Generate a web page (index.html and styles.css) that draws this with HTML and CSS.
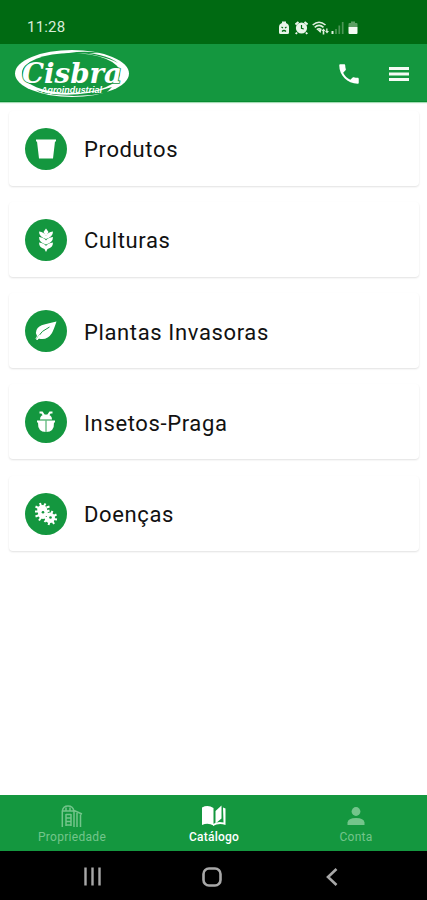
FILE: index.html
```
<!DOCTYPE html>
<html lang="pt-BR">
<head>
    <meta charset="UTF-8">
    <title>Cisbra - Catálogo</title>
    <link rel="stylesheet" href="styles.css">
</head>
<body>

<div class="app">
    <div class="status">
        <span class="time">11:28</span>
        <div class="status-icons">
            <svg width="10" height="14" viewBox="0 0 10 14">
                <path d="M3 0.500h4v1.500q3 1 3 4v5.500q0 1.500-1.500 1.500h-7Q0 13 0 11.500V6q0-3 3-4z" fill="#e9f5e9"/>
                <path d="M2.500 6l1.500 1M7.500 6L6 7M3 10.500q2-2 4 0" stroke="#006a12" stroke-width="1.200" fill="none"/>
            </svg>
            <svg class="alarm" width="13" height="14" viewBox="0 0 13 14">
                <path d="M0.500 3.500L3.500 1M12.500 3.500L9.500 1M2 11.500L0.800 13M11 11.500l1.200 1.500" stroke="#e9f5e9" stroke-width="2"/>
                <circle cx="6.500" cy="7" r="5.600" fill="#e9f5e9"/>
                <path d="M6.500 4v3.300l2.300 0.700" stroke="#006a12" stroke-width="1.200" fill="none"/>
            </svg>
            <svg width="17" height="14" viewBox="0 0 17 14">
                <path d="M0.700 4Q7-1.500 13.500 4M2.700 6.400Q7 2.500 11.500 6.400M4.800 8.700Q7 6.800 9.300 8.700" stroke="#dff0df" stroke-width="1.600" fill="none"/>
                <path d="M5 8.500h4.500L8.500 12zM9.500 10L11.500 7.500l2 2.500h-1.200v3.500h-1.600V10zM13 10h1.200V7.500h1.300V10H17l-2 2.500z" fill="#dff0df"/>
            </svg>
            <svg class="signal" width="13" height="14" viewBox="0 0 13 14">
                <path d="M1.500 10v3" stroke="#dff0df" stroke-width="2"/>
                <path d="M5 8v5M8.300 4.500V13M11.700 1v12" stroke="#4c9656" stroke-width="1.700"/>
            </svg>
            <svg width="10" height="14" viewBox="0 0 10 14">
                <path d="M3 0.500h4V2h1.500Q9.500 2 9.500 3v3h-9V3q0-1 1-1H3z" fill="#5ca064"/>
                <path d="M0.500 6h9v6q0 1-1 1h-7q-1 0-1-1z" fill="#f4fbf4"/>
            </svg>
        </div>
    </div>

    <header class="topbar">
        <svg class="logo" width="116" height="50" viewBox="0 0 116 50">
            <ellipse cx="58" cy="24.500" rx="57" ry="23.500" fill="#fff"/>
            <ellipse cx="57" cy="24" rx="49" ry="20" fill="#14973f"/>
            <path d="M39 8Q63 0 86 4Q60 4 39 8z" fill="#14973f"/>
            <path d="M60 3Q91 4 104 14Q89 6 60 3z" fill="#14973f"/>
            <path d="M22 41Q55 52 98 38L92 44Q60 50 28 44z" fill="#14973f"/>
            <text class="logo-name" x="8" y="34" textLength="100" lengthAdjust="spacingAndGlyphs">Cisbra</text>
            <text class="logo-sub" x="27" y="43.500" textLength="61" lengthAdjust="spacingAndGlyphs">Agroindustrial</text>
        </svg>
        <div class="actions">
            <svg width="26" height="26" viewBox="0 0 24 24" fill="#fff">
                <path d="M6.620 10.790c1.440 2.830 3.760 5.140 6.590 6.590l2.200-2.200c.27-.27.67-.36 1.020-.24 1.120.37 2.330.57 3.570.57.55 0 1 .45 1 1V20c0 .55-.45 1-1 1-9.390 0-17-7.610-17-17 0-.55.45-1 1-1h3.500c.55 0 1 .45 1 1 0 1.250.2 2.450.57 3.570.11.35.03.74-.25 1.020l-2.200 2.200z"/>
            </svg>
            <svg width="20" height="14" viewBox="0 0 20 14" fill="#f4fbf4">
                <path d="M0 0h20v3H0zM0 5.500h20v3H0zM0 11h20v3H0z"/>
            </svg>
        </div>
    </header>

    <main class="list">
        <div class="card">
            <span class="badge">
                <svg width="20" height="20" viewBox="0 0 20 20" fill="#fff">
                    <path d="M0 0.500h20v2h-1L17 19.500H3L1 2.500H0z"/>
                </svg>
            </span>
            <span class="label">Produtos</span>
        </div>
        <div class="card">
            <span class="badge">
                <svg width="16" height="24" viewBox="0 0 16 24" fill="#fff">
                    <path d="M8 0.500L10.500 4L8 8.500L5.500 4z"/>
                    <path d="M1 3.500Q6.500 4 8 8Q9.500 4 15 3.500Q15 9 8 11Q1 9 1 3.500z"/>
                    <path d="M1 9Q6.500 9.500 8 12.500Q9.500 9.500 15 9Q15 14.500 8 16.500Q1 14.500 1 9z"/>
                    <path d="M1 14.500Q6.500 15 8 18Q9.500 15 15 14.500Q15 19.500 9.500 21L8 24L6.500 21Q1 19.500 1 14.500z"/>
                </svg>
            </span>
            <span class="label">Culturas</span>
        </div>
        <div class="card">
            <span class="badge">
                <svg width="22" height="20" viewBox="0 0 22 20">
                    <path d="M21.500 0.500C13 3 4 3 1.500 9Q0 12 2 15L0.500 17.500Q2 20 3.500 17.500Q12 20 17 12Q19 8 21.500 0.500z" fill="#fff"/>
                    <path d="M1.500 17.500Q7 9 14.500 6" stroke="#14973f" stroke-width="1" fill="none"/>
                    <path d="M2 18.500L5 14" stroke="#fff" stroke-width="1.600"/>
                </svg>
            </span>
            <span class="label">Plantas Invasoras</span>
        </div>
        <div class="card">
            <span class="badge">
                <svg width="20" height="22" viewBox="0 0 20 22">
                    <path d="M3.500 1.500h2.500l2 3M16.500 1.500h-2.500l-2 3" stroke="#fff" stroke-width="2.200" fill="none"/>
                    <path d="M4 8.500Q4 3.500 10 3.500T16 8.500z" fill="#fff"/>
                    <path d="M1 9.500h18v2h-1Q18.500 21 10 21T2 11.500H1z" fill="#fff"/>
                    <path d="M10 9.500v11.500" stroke="#14973f" stroke-width="0.900"/>
                </svg>
            </span>
            <span class="label">Insetos-Praga</span>
        </div>
        <div class="card">
            <span class="badge">
                <svg width="24" height="24" viewBox="0 0 24 24">
                    <g fill="#fff">
                        <circle cx="8.200" cy="8" r="5"/>
                        <circle cx="9" cy="12" r="5"/>
                        <circle cx="15.800" cy="15.800" r="5.200"/>
                    </g>
                    <path d="M6 1l1 3M11.500 1.500L10 4M1.500 4.500l3 1.500M1 9.500h4M1.500 14.500l4-1.500M5 18.500L7.500 15M12.500 5.500l3-1M12.500 9.500l3-1M10.500 20l2-2.500M14.500 23l1-3M20 22l-1.500-3M23 17.500l-4-0.500M22.500 12.500l-3 1.500M18.500 9l-1.500 3" stroke="#fff" stroke-width="2"/>
                    <g fill="#14973f">
                        <circle cx="9" cy="10.300" r="1.300"/>
                        <circle cx="16.500" cy="15.500" r="1.300"/>
                        <circle cx="12.300" cy="14.500" r="0.600"/>
                    </g>
                </svg>
            </span>
            <span class="label">Doenças</span>
        </div>
    </main>

    <nav class="tabs">
        <div class="tab">
            <svg width="22" height="22" viewBox="0 0 22 22" fill="none" stroke="currentColor" stroke-width="1.500">
                <path d="M1.300 22V6Q2 1 7 1T13 6V22M1.500 6h11.500M13 5.500l8 3.500M16 8v14M19.500 9.500V22"/>
                <path d="M5 6V2.500M9 6V2.500M5 9.500h5M5 13h5M5 16.500h5M5 20h5M5 9v12M10 9v12"/>
            </svg>
            <span>Propriedade</span>
        </div>
        <div class="tab active">
            <svg width="24" height="22" viewBox="0 0 24 22" fill="currentColor">
                <path d="M0 2.500Q6-0.500 11.500 3V20.500Q6 17.500 0 20z"/>
                <path d="M13.500 6L19.500 0.500V13.500L13.500 18.500z"/>
                <path d="M21 2.500L23.500 3.500V20Q17 17.500 11 21V19Q16 16 21.500 17.500z"/>
            </svg>
            <span>Catálogo</span>
        </div>
        <div class="tab">
            <svg class="person" width="18" height="18" viewBox="0 0 18 18" fill="currentColor">
                <circle cx="9" cy="4.500" r="4.400"/>
                <path d="M0.500 18v-2.500Q1 11 9 11t8.500 4.500V18z"/>
            </svg>
            <span>Conta</span>
        </div>
    </nav>

    <div class="sysnav">
        <svg width="17" height="19" viewBox="0 0 17 19" stroke="#a8a8a8" stroke-width="2.400">
            <path d="M1.500 0.500v18M8.500 0.500v18M15.500 0.500v18"/>
        </svg>
        <svg class="home" width="20" height="20" viewBox="0 0 20 20" fill="none" stroke="#a8a8a8" stroke-width="2.600">
            <rect x="1.500" y="1.500" width="17" height="17" rx="5.500"/>
        </svg>
        <svg width="12" height="18" viewBox="0 0 12 18" fill="none" stroke="#a8a8a8" stroke-width="2.600">
            <path d="M10.500 1L2 9l8.500 8"/>
        </svg>
    </div>
</div>

</body>
</html>
```
FILE: styles.css
```
body {
    margin: 0;
    font-family: Roboto, sans-serif;
    background: #fff;
}
svg {
    display: block;
    flex-shrink: 0;
}
.app {
    display: flex;
    flex-direction: column;
    height: 900px;
    width: 427px;
    overflow: hidden;
}
.status {
    height: 44px;
    box-sizing: border-box;
    padding: 10px 69px 0 27px;
    display: flex;
    align-items: center;
    justify-content: space-between;
    background: #006a12;
}
.time {
    color: #d9ecd9;
    font-size: 15px;
    letter-spacing: 0.2px;
}
.status-icons {
    display: flex;
    gap: 4px;
    padding-top: 1px;
}
.alarm {
    margin-left: 2px;
}
.signal {
    margin-left: -2px;
}
.topbar {
    height: 58px;
    box-sizing: border-box;
    padding: 3px 18px 0 14px;
    display: flex;
    align-items: center;
    justify-content: space-between;
    background: #14973f;
    border-bottom: 1px solid #078c30;
    box-shadow: 0 1px 1px #a5dcb5;
}
.logo {
    overflow: visible;
}
.logo-name {
    font: italic bold 27px "DejaVu Serif", serif;
    fill: #fff;
    stroke: #14973f;
    stroke-width: 1.6px;
    paint-order: stroke;
}
.logo-sub {
    font: italic bold 9px "Liberation Sans", sans-serif;
    fill: #fff;
}
.actions {
    display: flex;
    align-items: center;
    gap: 27px;
}
.list {
    flex: 1;
    padding: 8.5px 8px 0 9px;
    display: flex;
    flex-direction: column;
    gap: 16.25px;
}
.card {
    height: 75px;
    padding-left: 16px;
    display: flex;
    align-items: center;
    gap: 17px;
    border-radius: 4px;
    box-shadow: 0 1px 2px rgba(0, 0, 0, 0.12);
}
.badge {
    width: 42px;
    height: 42px;
    margin-top: 1px;
    border-radius: 50%;
    display: flex;
    align-items: center;
    justify-content: center;
    background: #14973f;
}
.label {
    padding-top: 3px;
    font-size: 22px;
    letter-spacing: 0.63px;
    color: #111;
}
.tabs {
    height: 56px;
    box-sizing: border-box;
    padding-left: 1px;
    display: flex;
    background: #14973f;
}
.tab {
    flex: 1;
    display: flex;
    flex-direction: column;
    align-items: center;
    justify-content: flex-end;
    padding-bottom: 7px;
    gap: 3px;
    font-size: 12px;
    letter-spacing: 0.3px;
    color: #73c58b;
}
.active {
    color: #fff;
    font-weight: 500;
    letter-spacing: 0.2px;
}
.person {
    margin-bottom: 2px;
}
.sysnav {
    height: 49px;
    box-sizing: border-box;
    padding: 2px 89px 0 84px;
    display: flex;
    align-items: center;
    justify-content: space-between;
    background: #000;
}
.home {
    margin-right: 4px;
}
```
